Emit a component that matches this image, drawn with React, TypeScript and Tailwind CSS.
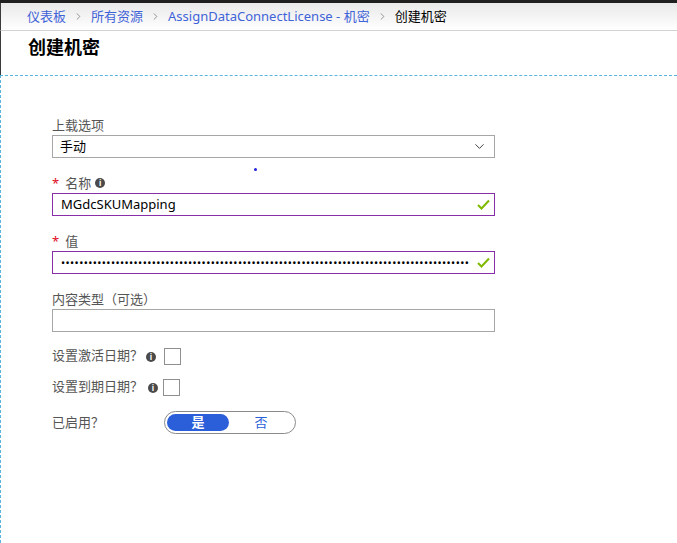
import { ChevronDown, ChevronRight } from "lucide-react";

function Info() {
  return (
    <span className="inline-flex h-[10px] w-[10px] items-center justify-center rounded-full bg-[#4a4a4a] text-[8px] font-bold leading-none text-white">
      i
    </span>
  );
}

function Check() {
  return (
    <svg width="13" height="11" viewBox="0 0 13 11" className="shrink-0">
      <path d="M1 6 L4.5 9.5 L12 1.5" fill="none" stroke="#7fba00" strokeWidth="2" />
    </svg>
  );
}

export default function App() {
  const crumbs = ["仪表板", "所有资源", "AssignDataConnectLicense - 机密"];

  return (
    <div
      className="relative h-[543px] w-[677px] overflow-hidden bg-white text-[13px]"
      style={{ fontFamily: '"Noto Sans", "Noto Sans CJK SC", sans-serif' }}
    >
      <div className="h-[3px] bg-[#1f1f1f]" />
      <div className="flex h-[28px] items-center border-b border-l border-b-[#d2d2d2] border-l-[#3a3a3a] bg-gradient-to-b from-[#e9e9e9] to-white pl-[26px]">
        {crumbs.map((c) => (
          <span key={c} className="flex items-center">
            <span className="text-[#3f63d8]">{c}</span>
            <ChevronRight size={11} strokeWidth={1.5} className="mx-[7px] text-[#666]" />
          </span>
        ))}
        <span className="text-black">创建机密</span>
      </div>
      <div className="flex h-[44px] items-start border-l border-[#3a3a3a] pl-[27px] pt-[4px]">
        <h1 className="text-[18px] font-bold leading-[24px] text-black">创建机密</h1>
      </div>

      <div className="h-[468px] border-l border-t border-dashed border-[#5bb4dc]">
        <div className="flex w-[494px] flex-col pl-[51px] pt-[40px]">
          <label className="leading-[18px] text-[#555]">上载选项</label>
          <div className="mt-[1px] flex h-[23px] items-center justify-between border border-[#a6a6a6] px-[7px]">
            <span className="text-black">手动</span>
            <ChevronDown size={15} strokeWidth={1.5} className="text-[#333]" />
          </div>

          <div className="relative mt-[16px] flex items-center leading-[18px]">
            <span className="mr-[6px] text-[#e00b1c]">*</span>
            <span className="mr-[4px] text-[#555]">名称</span>
            <Info />
            <span className="absolute left-[202px] top-[-6px] h-[3px] w-[3px] rounded-full bg-[#2222dd]" />
          </div>
          <div className="mt-[1px] flex h-[23px] items-center justify-between border border-[#8a2da8] pl-[8px] pr-[4px]">
            <span className="text-black">MGdcSKUMapping</span>
            <Check />
          </div>

          <div className="mt-[16px] flex items-center leading-[18px]">
            <span className="mr-[6px] text-[#e00b1c]">*</span>
            <span className="text-[#555]">值</span>
          </div>
          <div className="mt-[1px] flex h-[23px] items-center justify-between border border-[#8a2da8] pl-[8px] pr-[4px]">
            <span className="whitespace-nowrap text-[11px] leading-none tracking-[0.4px] text-black">
              {"•".repeat(90)}
            </span>
            <Check />
          </div>

          <label className="mt-[16px] leading-[18px] text-[#555]">内容类型（可选）</label>
          <div className="mt-[1px] h-[23px] border border-[#a6a6a6]" />

          <div className="mt-[15px] flex h-[18px] items-center">
            <span className="text-[#555]">设置激活日期？</span>
            <span className="ml-[3px]"><Info /></span>
            <span className="ml-[8px] h-[17px] w-[17px] border border-[#8f8f8f]" />
          </div>
          <div className="mt-[13px] flex h-[18px] items-center">
            <span className="text-[#555]">设置到期日期？</span>
            <span className="ml-[5px]"><Info /></span>
            <span className="ml-[5px] h-[17px] w-[17px] border border-[#8f8f8f]" />
          </div>
          <div className="mt-[15px] flex items-center">
            <span className="w-[112px] text-[#555]">已启用？</span>
            <div className="flex h-[23px] w-[132px] items-center rounded-full border border-[#8a8a8a] p-[2px]">
              <span className="flex h-[17px] w-[62px] items-center justify-center rounded-full bg-[#2b5fd9] font-bold text-white">
                是
              </span>
              <span className="flex-1 text-center text-[#2b5fd9]">否</span>
            </div>
          </div>
        </div>
      </div>
    </div>
  );
}
